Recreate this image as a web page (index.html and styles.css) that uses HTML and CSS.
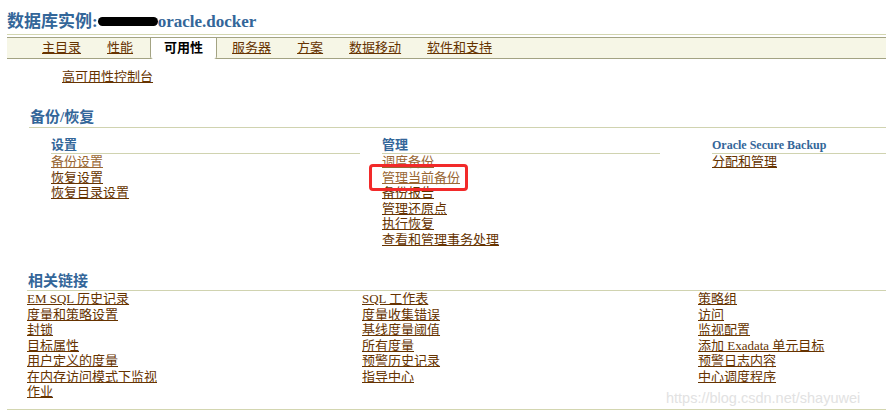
FILE: index.html
```html
<!DOCTYPE html>
<html lang="zh-CN">
<head>
<meta charset="utf-8">
<title>可用性</title>
<link rel="stylesheet" href="styles.css">
</head>
<body>
<div class="page">
  <div class="title">数据库实例:<span class="redact"></span>oracle.docker</div>
  <div class="title-rule"></div>
  <div class="tabbar">
    <a class="tab" href="#">主目录</a>
    <a class="tab" href="#">性能</a>
    <span class="tab active">可用性</span>
    <a class="tab" href="#">服务器</a>
    <a class="tab" href="#">方案</a>
    <a class="tab" href="#">数据移动</a>
    <a class="tab" href="#">软件和支持</a>
  </div>

  <div class="console"><a href="#">高可用性控制台</a></div>

  <div class="section backup">
    <h2 class="sec-head">备份/恢复</h2>
    <div class="cols">
      <div class="col">
        <h3 class="col-head">设置</h3>
        <ul class="links">
          <li><a class="seen" href="#">备份设置</a></li>
          <li><a href="#">恢复设置</a></li>
          <li><a href="#">恢复目录设置</a></li>
        </ul>
      </div>
      <div class="col">
        <h3 class="col-head">管理</h3>
        <ul class="links">
          <li><a class="seen" href="#">调度备份</a></li>
          <li><span class="marked"><a class="seen" href="#">管理当前备份</a></span></li>
          <li><a href="#">备份报告</a></li>
          <li><a href="#">管理还原点</a></li>
          <li><a href="#">执行恢复</a></li>
          <li><a href="#">查看和管理事务处理</a></li>
        </ul>
      </div>
      <div class="col">
        <h3 class="col-head osb">Oracle Secure Backup</h3>
        <ul class="links">
          <li><a href="#">分配和管理</a></li>
        </ul>
      </div>
    </div>
  </div>

  <div class="section related">
    <h2 class="sec-head">相关链接</h2>
    <div class="rel-cols">
      <ul class="links">
        <li><a href="#">EM SQL 历史记录</a></li>
        <li><a href="#">度量和策略设置</a></li>
        <li><a href="#">封锁</a></li>
        <li><a href="#">目标属性</a></li>
        <li><a href="#">用户定义的度量</a></li>
        <li><a href="#">在内存访问模式下监视</a></li>
        <li><a href="#">作业</a></li>
      </ul>
      <ul class="links">
        <li><a href="#">SQL 工作表</a></li>
        <li><a href="#">度量收集错误</a></li>
        <li><a href="#">基线度量阈值</a></li>
        <li><a href="#">所有度量</a></li>
        <li><a href="#">预警历史记录</a></li>
        <li><a href="#">指导中心</a></li>
      </ul>
      <ul class="links">
        <li><a href="#">策略组</a></li>
        <li><a href="#">访问</a></li>
        <li><a href="#">监视配置</a></li>
        <li><a href="#">添加 Exadata 单元目标</a></li>
        <li><a href="#">预警日志内容</a></li>
        <li><a href="#">中心调度程序</a></li>
      </ul>
    </div>
  </div>

  <div class="bottom-rule"></div>
  <div class="watermark">https://blog.csdn.net/shayuwei</div>
</div>
</body>
</html>
```

FILE: styles.css
```css
html, body {
  margin: 0;
  padding: 0;
  background: #ffffff;
}

body {
  font-family: "Liberation Serif", "Noto Sans CJK SC", serif;
  font-size: 13px;
  color: #000000;
}

.page {
  position: relative;
  width: 886px;
  height: 416px;
  overflow: hidden;
}

a {
  color: #663300;
  text-decoration: underline;
}

a.seen {
  color: #996633;
}

ul.links {
  list-style: none;
  margin: 0;
  padding: 0;
}

ul.links li {
  line-height: 15.5px;
  height: 15.5px;
  white-space: nowrap;
}

/* title */
.title {
  box-sizing: border-box;
  height: 34px;
  padding: 12px 0 0 7px;
  font-size: 17px;
  line-height: 20px;
  font-weight: bold;
  color: #336699;
  white-space: nowrap;
}

.redact {
  display: inline-block;
  width: 60px;
  height: 9px;
  background: #000000;
  border-radius: 5px;
  vertical-align: 1px;
}

.title-rule {
  margin-left: 7px;
  height: 1px;
  background: #d3d6b0;
}

/* tabs */
.tabbar {
  display: flex;
  margin: 2px 0 0 7px;
  padding-left: 22px;
  height: 20px;
  background: #f6f6e6;
  border-top: 1px solid #a3a383;
  border-bottom: 1px solid #a3a383;
}

.tab {
  padding: 0 13px;
  line-height: 20px;
  font-size: 13px;
  white-space: nowrap;
}

.tab.active {
  margin: 0 2px 0 4px;
  height: 21px;
  margin-bottom: -1px;
  background: #ffffff;
  border-left: 1px solid #a3a383;
  border-right: 1px solid #a3a383;
  border-radius: 0 0 3px 3px;
  font-weight: bold;
  color: #000000;
}

/* console link */
.console {
  margin: 10px 0 0 62px;
  line-height: 16px;
}

/* sections */
.sec-head {
  margin: 0;
  font-size: 15px;
  line-height: 18px;
  font-weight: bold;
  color: #336699;
  border-bottom: 1px solid #d0d3b0;
  padding-left: 1px;
}

.backup {
  margin: 23px 0 0 29px;
}

.backup .sec-head {
  padding-bottom: 1px;
}

.cols {
  display: grid;
  grid-template-columns: 309px 300px 1fr;
  column-gap: 0;
  margin: 9px 0 0 22px;
}

.cols .col:nth-child(2) {
  margin-left: 22px;
}

.cols .col:nth-child(3) {
  margin-left: 52px;
}

.col-head {
  margin: 0;
  font-size: 13px;
  line-height: 16px;
  font-weight: bold;
  color: #336699;
  border-bottom: 1px solid #d0d3b0;
}

.col-head.osb {
  font-size: 12px;
}

.marked {
  position: relative;
}

.marked::after {
  content: "";
  position: absolute;
  left: -13px;
  top: -6px;
  width: 99px;
  height: 27px;
  box-sizing: border-box;
  border: 3px solid #f22a2a;
  border-radius: 4px;
  pointer-events: none;
}

.related {
  margin: 25px 0 0 27px;
}

.related .sec-head {
  padding-left: 1px;
}

.rel-cols {
  display: grid;
  grid-template-columns: 335px 336px 1fr;
}

.bottom-rule {
  margin: 9px 0 0 7px;
  height: 1px;
  background: #d3d6b0;
}

.watermark {
  position: absolute;
  left: 666px;
  top: 389px;
  font-family: "Liberation Sans", Arial, sans-serif;
  font-size: 14.5px;
  line-height: 18px;
  color: #e2e2e2;
  white-space: nowrap;
}
```
